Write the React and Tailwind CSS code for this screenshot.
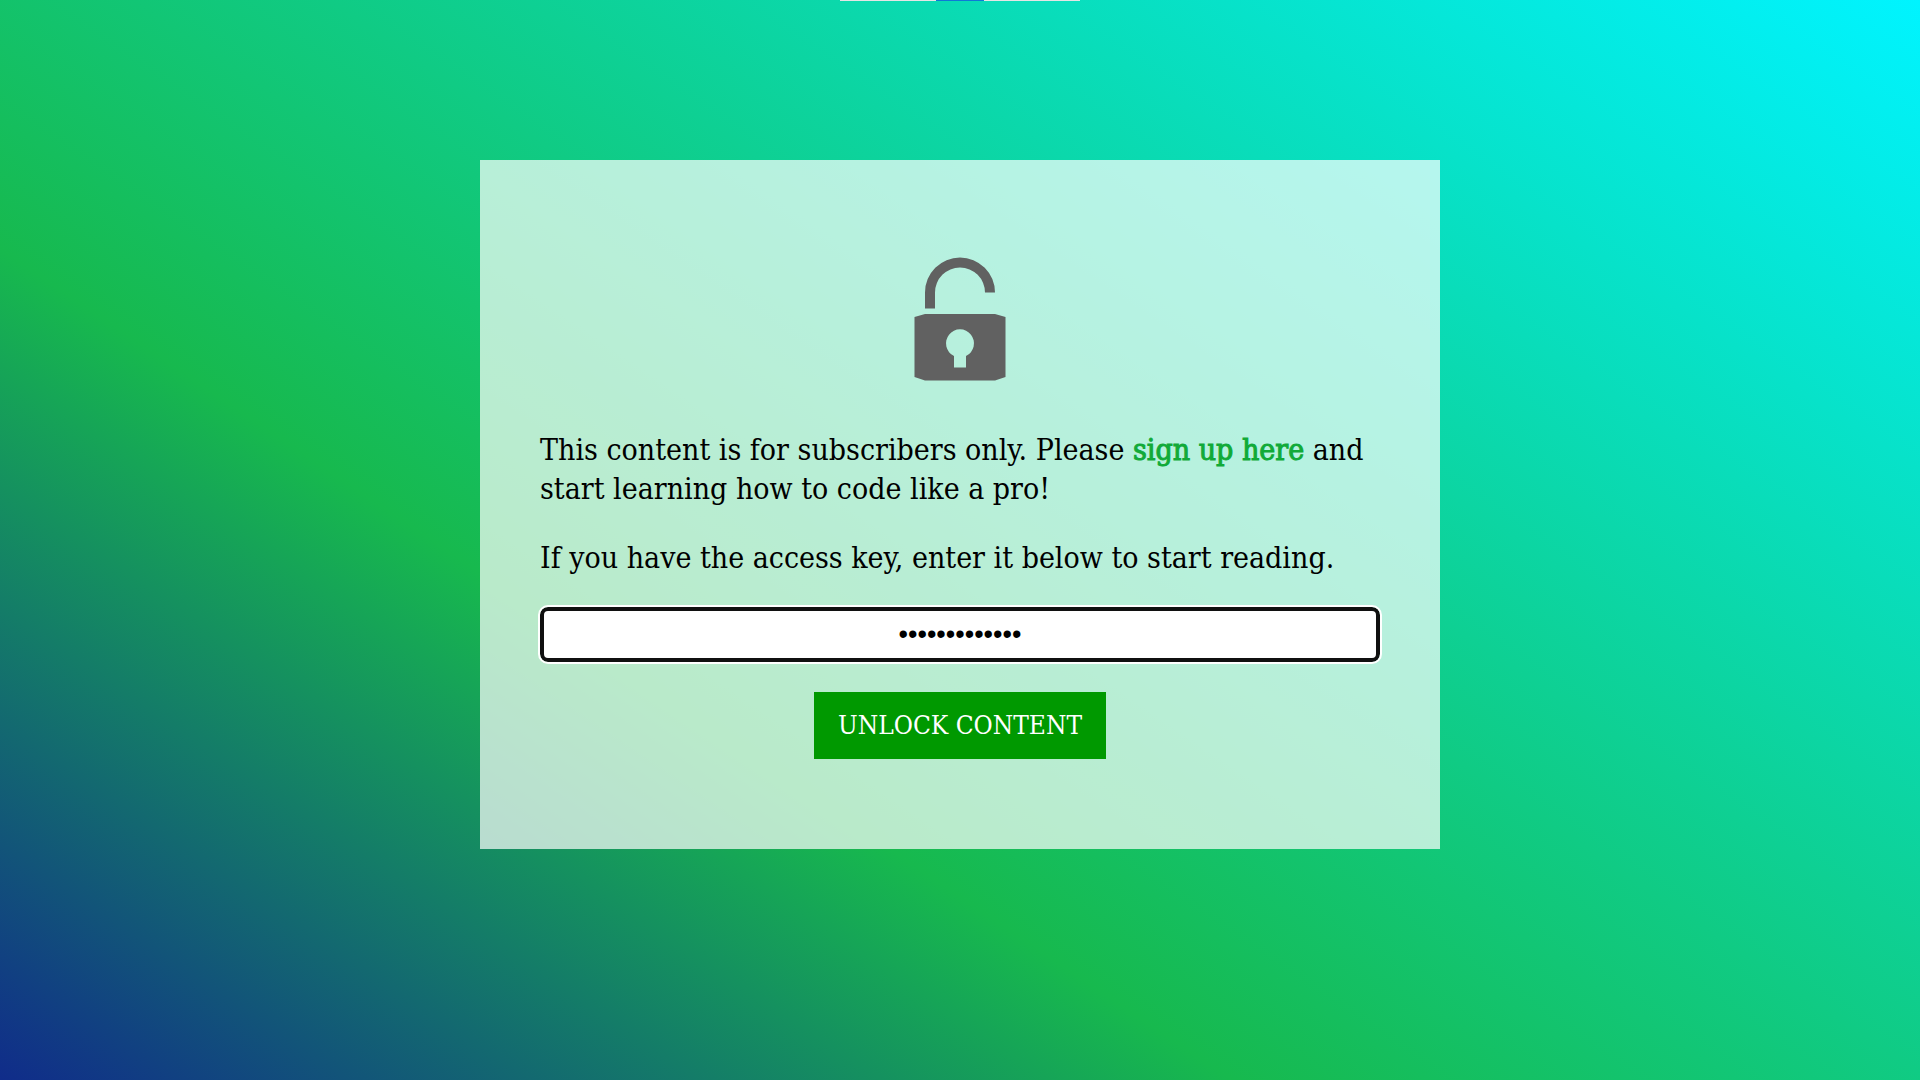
import React, { useState } from 'react';

const LockIcon = () => (
    <svg width="92" height="124" viewBox="0 0 92 124" fill="#616161" aria-hidden="true">
        <path d="M11 51.5V35.5a35 35 0 0 1 70 0h-10a25 25 0 0 0-50 0v16z" />
        <path
            fillRule="evenodd"
            d="M11 57h70l10.500 3v60l-10.500 3.500H11L0.500 120V60zM40 99v11.500h12V99a14 14 0 1 0-12 0z"
        />
    </svg>
);

export default function App() {
    const [accessKey, setAccessKey] = useState('letmein-12345');

    return (
        <div className="relative flow-root min-h-screen px-4 bg-[linear-gradient(34deg,#102c8a_0%,#17b94e_35%,#00f4ff_100%)] font-['Roboto_Slab','DejaVu_Serif_Condensed','DejaVu_Serif',serif] font-light text-black">
            {/* Toolbar edge peeking in over the page */}
            <div className="absolute inset-x-0 top-0 flex justify-center">
                <div className="h-px w-24 bg-[#e5e5e5]" />
                <div className="h-px w-12 bg-[#0f78d7]" />
                <div className="h-px w-24 bg-[#e5e5e5]" />
            </div>

            <main className="mx-auto mt-40 w-full max-w-[960px] bg-white/70 px-[60px] pt-[97px] pb-[90px]">
                <div className="flex justify-center">
                    <LockIcon />
                </div>

                <p className="mt-[49px] text-[30px] leading-[39px]">
                    This content is for subscribers only. Please{' '}
                    <a href="#signup" className="text-[#11aa38] [-webkit-text-stroke:1px]">sign up here</a> and start
                    learning how to code like a pro!
                </p>
                <p className="mt-[30px] text-[30px] leading-[39px]">
                    If you have the access key, enter it below to start reading.
                </p>

                <form onSubmit={e => e.preventDefault()}>
                    <input
                        type="password"
                        aria-label="Access key"
                        value={accessKey}
                        onChange={e => setAccessKey(e.target.value)}
                        className="mt-[30px] block h-[55px] w-full rounded-lg border-4 border-[#101010] bg-white px-4 text-center font-['Liberation_Sans',sans-serif] text-[27px] outline-2 outline-white"
                    />
                    <div className="mt-[30px] flex justify-center">
                        <button type="submit" className="h-[67px] bg-[#009900] px-6 text-[26px] text-white uppercase">
                            Unlock content
                        </button>
                    </div>
                </form>
            </main>
        </div>
    );
}
